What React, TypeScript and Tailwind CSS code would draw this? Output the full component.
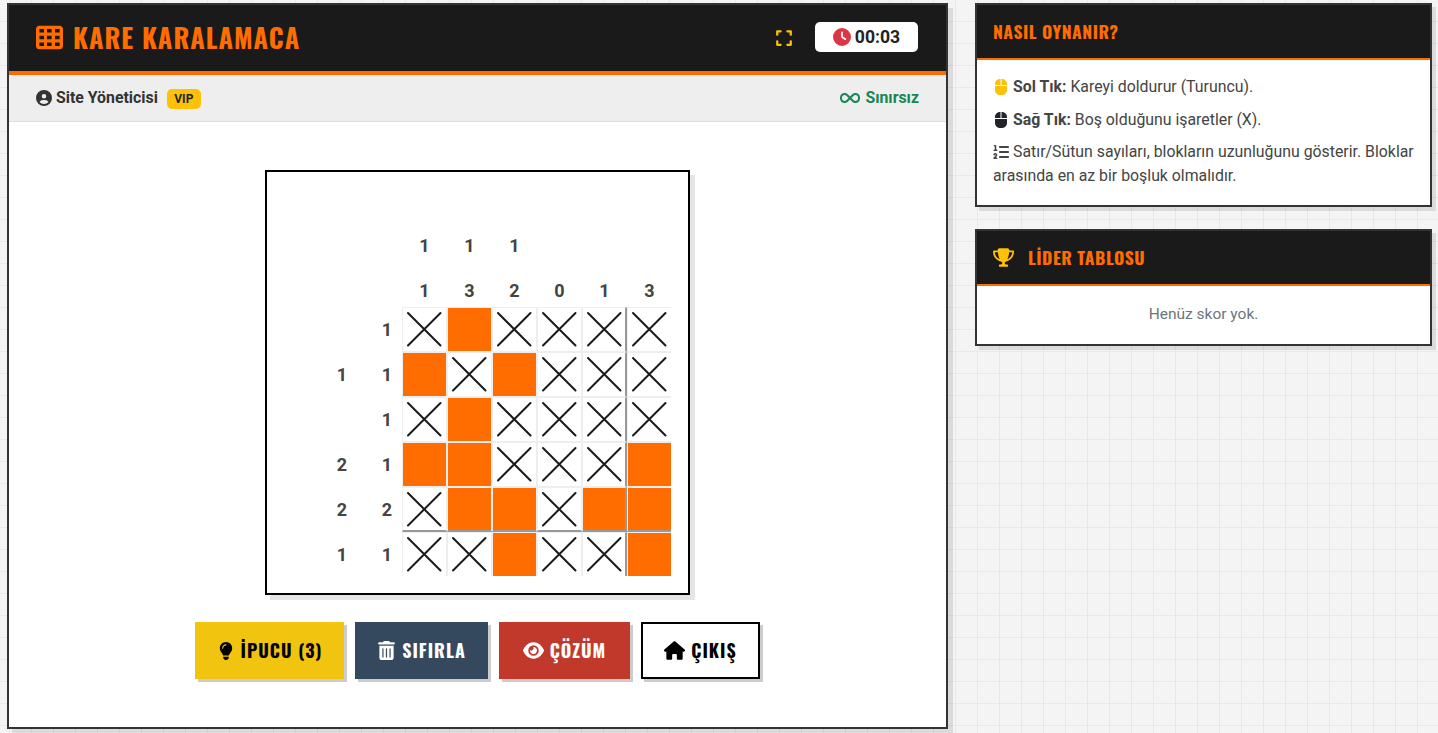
import React from 'react';
import { FaTableCells, FaExpand, FaClock, FaCircleUser, FaInfinity, FaComputerMouse, FaTrophy, FaLightbulb, FaTrashCan, FaEye, FaHouse, FaListOl } from 'react-icons/fa6';

const heading = "font-['Oswald','Liberation_Sans_Narrow','Roboto_Condensed','Liberation_Sans',sans-serif]";

const colClues: number[][] = [[1, 1], [1, 3], [1, 2], [0], [1], [3]];
const rowClues: number[][] = [[1], [1, 1], [1], [2, 1], [2, 2], [1, 1]];

// 1 = filled, 0 = marked X
const board = [
  [0, 1, 0, 0, 0, 0],
  [1, 0, 1, 0, 0, 0],
  [0, 1, 0, 0, 0, 0],
  [1, 1, 0, 0, 0, 1],
  [0, 1, 1, 0, 1, 1],
  [0, 0, 1, 0, 0, 1],
];

const Cross = () => (
  <svg width="45" height="45" viewBox="0 0 45 45" className="block">
    <path d="M6 6 L38.5 38.5 M38.5 6 L6 38.5" stroke="#1a1a1a" strokeWidth="2" strokeLinecap="round" />
  </svg>
);

const Cell = ({ filled, r, c }: { filled: boolean; r: number; c: number }) => {
  const w = c === 5 ? 'w-[44px] border-r-0' : c === 4 ? 'w-[45px] border-r-2 border-r-[#999999]' : 'w-[45px] border-r';
  const h = r === 5 ? 'h-[44px] border-b-0' : r === 4 ? 'h-[45px] border-b-2 border-b-[#999999]' : 'h-[45px] border-b';
  return (
    <div className={`box-border overflow-hidden border-[#eeeeee] border-t border-l ${w} ${h} ${filled ? 'bg-[#ff6d00]' : 'bg-white'}`}>
      {!filled && <div className="-m-px"><Cross /></div>}
    </div>
  );
};

const Button = ({ className, icon, label }: { className: string; icon: React.ReactNode; label: string }) => (
  <button className={`h-[57px] flex items-center justify-center gap-[6px] shadow-[3px_3px_0_#cccccc] ${heading} font-bold text-[18px] tracking-[1px] ${className}`}>
    {icon}
    {label}
  </button>
);

export default function App() {
  return (
    <div className="min-h-[733px] w-full overflow-hidden bg-[#f4f4f4] bg-[linear-gradient(#e8e8e8_1px,transparent_1px),linear-gradient(90deg,#e8e8e8_1px,transparent_1px)] bg-[size:22px_22px] bg-[position:9px_21px] font-['Roboto',sans-serif] text-[#333333]">
      <div className="flex items-start pl-[7px] pt-[3px] gap-[27px]">
        {/* game panel */}
        <div className="w-[941px] h-[726px] shrink-0 bg-white border-2 border-[#333333] shadow-[5px_5px_0_rgba(0,0,0,0.1)] flex flex-col">
          <div className="h-[70px] shrink-0 bg-[#1a1a1a] border-b-4 border-[#ff6d00] flex items-center justify-between pl-[27px] pr-[28px]">
            <div className={`flex items-center gap-[10px] text-[#ff6d00] ${heading} font-bold text-[26.4px] tracking-[1px]`}>
              <FaTableCells size={27} />
              KARE KARALAMACA
            </div>
            <div className="flex items-center gap-[22px]">
              <FaExpand size={18} className="text-[#ffc107]" />
              <div className="mb-[2px] w-[103px] h-[30px] bg-white rounded-[5px] flex items-center justify-center gap-[4px] text-[#212529] font-bold text-[17.6px]">
                <FaClock size={18} className="text-[#dc3545]" />
                00:03
              </div>
            </div>
          </div>
          <div className="h-[47px] shrink-0 bg-[#eeeeee] border-b border-[#dddddd] flex items-center justify-between pl-[27px] pr-[27px]">
            <div className="flex items-center font-bold text-[15.85px] text-[#333333]">
              <FaCircleUser size={16} className="mr-[4px]" />
              Site Yöneticisi
              <span className="ml-[9px] mt-[2px] h-[20px] w-[34px] rounded-[5px] bg-[#ffc107] text-[#212529] text-[12px] flex items-center justify-center">VIP</span>
            </div>
            <div className="flex items-center gap-[5px] font-bold text-[15.85px] text-[#198754]">
              <FaInfinity size={20} />
              Sınırsız
            </div>
          </div>
          <div className="flex-1 flex flex-col items-center pt-[48px]">
            <div className="w-[425px] h-[425px] border-2 border-black bg-white shadow-[5px_5px_0_rgba(0,0,0,0.1)] pt-[51px]">
              <div className="flex -mb-[6px]">
                <div className="w-[135px]" />
                {colClues.map((clue, i) => (
                  <div key={i} className="w-[45px] h-[90px] flex flex-col justify-end items-center font-bold text-[18px] text-[#444444]">
                    {clue.map((n, j) => (
                      <div key={j} className="h-[45px] flex items-center justify-center">{n}</div>
                    ))}
                  </div>
                ))}
              </div>
              {board.map((row, r) => (
                <div key={r} className="flex">
                  <div className="w-[135px] flex justify-end gap-[15px] font-bold text-[18px] text-[#444444]">
                    {rowClues[r].map((n, j) => (
                      <div key={j} className="w-[30px] h-[45px] flex items-center justify-center">{n}</div>
                    ))}
                  </div>
                  {row.map((v, c) => (
                    <Cell key={c} filled={v === 1} r={r} c={c} />
                  ))}
                </div>
              ))}
            </div>
            <div className="flex gap-[11px] mt-[27px]">
              <Button className="w-[149px] bg-[#f1c40f] text-black" icon={<FaLightbulb size={18} />} label="İPUCU (3)" />
              <Button className="w-[133px] bg-[#34495e] text-white" icon={<FaTrashCan size={19} />} label="SIFIRLA" />
              <Button className="w-[131px] bg-[#c0392b] text-white" icon={<FaEye size={21} />} label="ÇÖZÜM" />
              <Button className="w-[119px] bg-white text-black border-2 border-black" icon={<FaHouse size={21} />} label="ÇIKIŞ" />
            </div>
          </div>
        </div>

        {/* side column */}
        <div className="w-[457px] shrink-0 flex flex-col gap-[22px]">
          <div className="bg-white border-2 border-[#333333] shadow-[4px_4px_0_rgba(0,0,0,0.1)]">
            <div className={`h-[55px] bg-[#1a1a1a] border-b-2 border-[#ff6d00] flex items-center pl-[16px] text-[#ff6d00] ${heading} font-bold text-[17.6px] tracking-[0.5px]`}>
              NASIL OYNANIR?
            </div>
            <div className="px-[16px] pt-[15px] pb-[17px] text-[15.85px] leading-[24px] text-[#444444]">
              <p className="mb-[9px]">
                <FaComputerMouse size={16} className="inline text-[#ffc107] mr-[4px] -mt-[2px]" />
                <b>Sol Tık:</b> Kareyi doldurur (Turuncu).
              </p>
              <p className="mb-[8px]">
                <FaComputerMouse size={16} className="inline text-[#212529] mr-[4px] -mt-[2px]" />
                <b>Sağ Tık:</b> Boş olduğunu işaretler (X).
              </p>
              <p>
                <FaListOl size={16} className="inline mr-[4px] -mt-[2px]" />
                Satır/Sütun sayıları, blokların uzunluğunu gösterir. Bloklar arasında en az bir boşluk olmalıdır.
              </p>
            </div>
          </div>
          <div className="bg-white border-2 border-[#333333] shadow-[4px_4px_0_rgba(0,0,0,0.1)]">
            <div className={`h-[55px] bg-[#1a1a1a] border-b-2 border-[#ff6d00] flex items-center pl-[16px] gap-[14px] text-[#ff6d00] ${heading} font-bold text-[17.6px] tracking-[0.5px]`}>
              <FaTrophy size={21} className="text-[#ffc107]" />
              LİDER TABLOSU
            </div>
            <div className="h-[58px] flex items-center justify-center text-[15.5px] text-[#6c757d]">Henüz skor yok.</div>
          </div>
        </div>
      </div>
    </div>
  );
}
